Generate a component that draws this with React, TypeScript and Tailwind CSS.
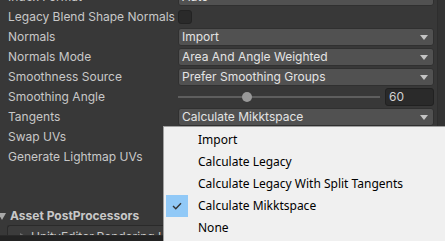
import React from "react";

const Arrow = () => (
  <svg width="8" height="5" viewBox="0 0 8 5" className="shrink-0">
    <path d="M0 0 H8 L4 5 Z" fill="#c4c4c4" />
  </svg>
);

const Dropdown = ({ text }: { text: string }) => (
  <div className="flex h-[18px] flex-1 items-center justify-between rounded-[3px] border border-[#303030] bg-[#515151] pl-[3px] pr-[5px] text-[12px] text-[#e4e4e4]">
    <span className="leading-none">{text}</span>
    <Arrow />
  </div>
);

const Row = ({ label, children }: { label: string; children?: React.ReactNode }) => (
  <div className="flex h-[20px] items-center">
    <div className="w-[170px] shrink-0 text-[12px] leading-none text-[#c8c8c8]">{label}</div>
    <div className="flex flex-1 items-center">{children}</div>
  </div>
);

const items = [
  "Import",
  "Calculate Legacy",
  "Calculate Legacy With Split Tangents",
  "Calculate Mikktspace",
  "None",
];

export default function App() {
  return (
    <div
      className="relative flex h-[241px] w-[445px] flex-col overflow-hidden bg-[#383838]"
      style={{ fontFamily: "Inter, 'Noto Sans', sans-serif" }}
    >
      <div className="flex min-h-0 flex-1">
        <div className="flex flex-1 flex-col overflow-hidden pl-[8px] pr-[3px]">
          <div className="mt-[-13px] shrink-0">
            <Row label="Index Format">
              <Dropdown text="Auto" />
            </Row>
            <Row label="Legacy Blend Shape Normals">
              <div className="h-[14px] w-[14px] rounded-[3px] border border-[#232323] bg-[#2a2a2a]" />
            </Row>
            <Row label="Normals">
              <Dropdown text="Import" />
            </Row>
            <Row label="Normals Mode">
              <Dropdown text="Area And Angle Weighted" />
            </Row>
            <Row label="Smoothness Source">
              <Dropdown text="Prefer Smoothing Groups" />
            </Row>
            <Row label="Smoothing Angle">
              <div className="relative flex h-[18px] flex-1 items-center">
                <div className="h-[2px] flex-1 bg-[#5e5e5e]" />
                <div className="absolute left-[64px] top-[4px] h-[10px] w-[10px] rounded-full bg-[#999999]" />
              </div>
              <div className="ml-[5px] flex h-[18px] w-[49px] items-center rounded-[3px] border border-[#212121] bg-[#2a2a2a] pl-[3px] text-[12px] text-[#d2d2d2]">
                60
              </div>
            </Row>
            <Row label="Tangents">
              <Dropdown text="Calculate Mikktspace" />
            </Row>
            <Row label="Swap UVs" />
            <Row label="Generate Lightmap UVs" />
          </div>
          <div className="ml-[-10px] mt-[40px] flex h-[18px] shrink-0 items-center gap-[4px]">
            <svg width="8" height="7" viewBox="0 0 8 7" className="shrink-0">
              <path d="M0 0 H8 L4 7 Z" fill="#a8a8a8" />
            </svg>
            <span className="text-[12px] font-bold leading-none text-[#c8c8c8]">Asset PostProcessors</span>
          </div>
          <div className="ml-[-1px] flex-1 overflow-hidden rounded-tl-[3px] border-l border-t border-[#2a2a2a] bg-[#3c3c3c]">
            <div className="flex h-[16px] items-center gap-[4px] pl-[12px] pt-[5px]">
              <svg width="7" height="8" viewBox="0 0 7 8" className="shrink-0">
                <path d="M0 0 V8 L7 4 Z" fill="#6e6e6e" />
              </svg>
              <span className="text-[12px] leading-none text-[#c8c8c8]">UnityEditor.Rendering.Universal</span>
            </div>
          </div>
        </div>
        <div className="w-[8px] shrink-0 border-l border-[#2e2e2e] bg-[#333333]" />
      </div>
      <div className="h-[6px] shrink-0 border-t border-[#2a2a2a] bg-[#232323]" />

      <div
        className="absolute left-[163px] top-[126px] w-[300px] border border-[#a0a0a0] bg-[#f0f0f0] py-[2px] pl-[2px] shadow-[2px_2px_3px_rgba(0,0,0,0.3)]"
        style={{ fontFamily: "'Segoe UI', 'Noto Sans', 'Open Sans', sans-serif" }}
      >
        {items.map((it) => (
          <div key={it} className="flex h-[22px] items-center">
            <div
              className={
                it === "Calculate Mikktspace"
                  ? "flex h-[22px] w-[22px] items-center justify-center bg-[#91c9f7]"
                  : "h-[22px] w-[22px]"
              }
            >
              {it === "Calculate Mikktspace" && (
                <svg width="10" height="8" viewBox="0 0 10 8">
                  <path d="M1 4 L3.8 6.8 L9 1.2" fill="none" stroke="#333" strokeWidth="1.4" />
                </svg>
              )}
            </div>
            <span className="ml-[10px] text-[12px] leading-none text-black">{it}</span>
          </div>
        ))}
      </div>
    </div>
  );
}
